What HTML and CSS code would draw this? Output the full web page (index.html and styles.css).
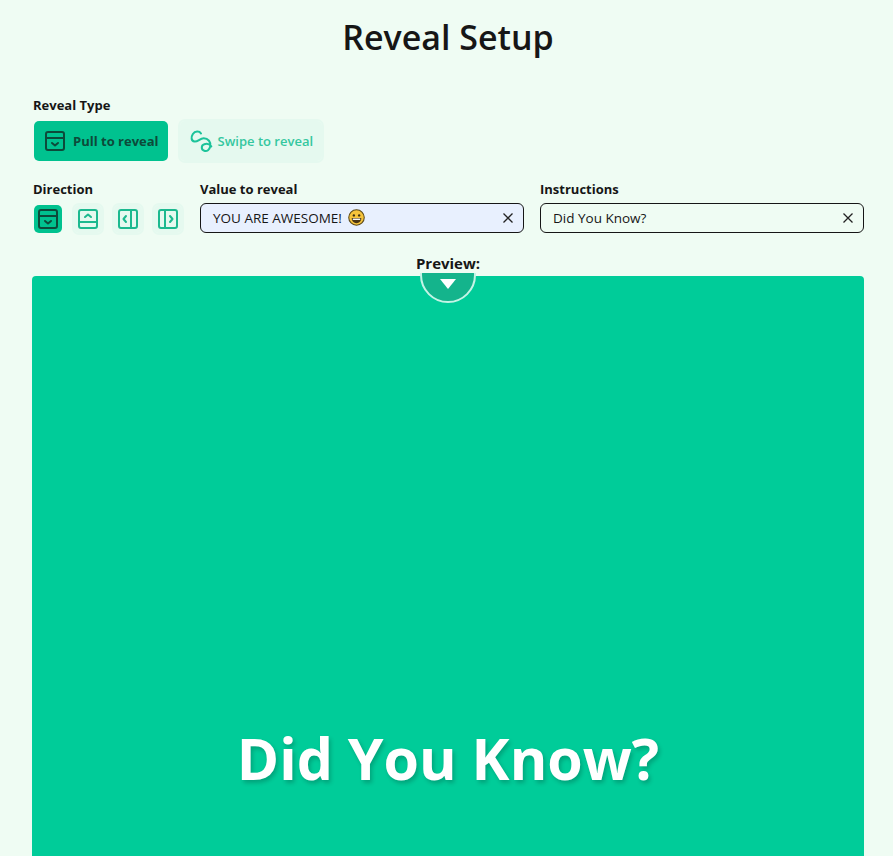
FILE: index.html
```html
<!DOCTYPE html>
<html lang="en">
<head>
  <meta charset="UTF-8" />
  <meta name="viewport" content="width=device-width, initial-scale=1.0"/>
  <title>Reveal Setup</title>
  <link rel="stylesheet" href="styles.css">
</head>
<body>

  <h1>Reveal Setup</h1>

  <div class="field type-field">
    <label class="inset">Reveal Type</label>
    <div class="type-row">
      <button class="type-btn active">
        <svg width="24" height="24" viewBox="0 0 24 24" fill="none" stroke="currentColor" stroke-width="2" stroke-linecap="round" stroke-linejoin="round"><rect x="3" y="3" width="18" height="18" rx="2"/><path d="M3 9h18"/><path d="M9 14l3 2.500 3-2.500"/></svg>
        Pull to reveal
      </button>
      <button class="type-btn">
        <svg class="swipe-icon" width="26" height="26" viewBox="0 0 24 24" fill="none" stroke="currentColor" stroke-width="1.900" stroke-linecap="round" stroke-linejoin="round"><path d="M12 5C10.500 2.500 6.500 2.500 4.500 5.500 2.500 8.500 3 12 6 12.500 9 13 11 9.500 14.500 9.500 18.500 9.500 21.500 13 20.500 17 20 20 17.500 22 15 21 12 20 12 16 15 15 17.500 14 20 15 21.500 17"/></svg>
        Swipe to reveal
      </button>
    </div>
  </div>

  <div class="options-row">
    <div class="field">
      <label class="inset">Direction</label>
      <div class="dir-row">
        <button class="dir-btn active">
          <svg width="24" height="24" viewBox="0 0 24 24" fill="none" stroke="currentColor" stroke-width="2" stroke-linecap="round" stroke-linejoin="round"><rect x="3" y="3" width="18" height="18" rx="2"/><path d="M3 9h18"/><path d="M9 14l3 2.500 3-2.500"/></svg>
        </button>
        <button class="dir-btn">
          <svg width="24" height="24" viewBox="0 0 24 24" fill="none" stroke="currentColor" stroke-width="2" stroke-linecap="round" stroke-linejoin="round"><rect x="3" y="3" width="18" height="18" rx="2"/><path d="M3 15h18"/><path d="M9 10l3-2.500 3 2.500"/></svg>
        </button>
        <button class="dir-btn">
          <svg width="24" height="24" viewBox="0 0 24 24" fill="none" stroke="currentColor" stroke-width="2" stroke-linecap="round" stroke-linejoin="round"><rect x="3" y="3" width="18" height="18" rx="2"/><path d="M15 3v18"/><path d="M10 9l-2.500 3 2.500 3"/></svg>
        </button>
        <button class="dir-btn">
          <svg width="24" height="24" viewBox="0 0 24 24" fill="none" stroke="currentColor" stroke-width="2" stroke-linecap="round" stroke-linejoin="round"><rect x="3" y="3" width="18" height="18" rx="2"/><path d="M9 3v18"/><path d="M14 9l2.500 3-2.500 3"/></svg>
        </button>
      </div>
    </div>
    <div class="field grow">
      <label>Value to reveal</label>
      <div class="text-input filled">
        <span>YOU ARE AWESOME! <span class="emoji"><svg width="17" height="17" viewBox="0 0 16 16"><circle cx="8" cy="8" r="7.300" fill="#f5c33b" stroke="#5c4a1a" stroke-width="1"/><circle cx="5.500" cy="6" r="1.100" fill="#3b2f12"/><circle cx="10.500" cy="6" r="1.100" fill="#3b2f12"/><path d="M3.500 8.500h9c0 3-2 4.800-4.500 4.800s-4.500-1.800-4.500-4.800z" fill="#4a3512"/><path d="M4.500 9h7v1.300h-7z" fill="#fff"/></svg></span></span>
        <svg class="clear" width="12" height="12" viewBox="0 0 12 12" fill="none" stroke="currentColor" stroke-width="1.300"><path d="M1.500 1.500l9 9M10.500 1.500l-9 9"/></svg>
      </div>
    </div>
    <div class="field grow">
      <label>Instructions</label>
      <div class="text-input">
        <span>Did You Know?</span>
        <svg class="clear" width="12" height="12" viewBox="0 0 12 12" fill="none" stroke="currentColor" stroke-width="1.300"><path d="M1.500 1.500l9 9M10.500 1.500l-9 9"/></svg>
      </div>
    </div>
  </div>

  <div class="preview-label">Preview:</div>
  <div class="preview">
    <div class="pull-handle"><span class="arrow"></span></div>
    <div class="preview-title">Did You Know?</div>
  </div>

</body>
</html>
```

FILE: styles.css
```css
html, body {
  height: 100%;
  overflow: hidden;
}
body {
  font-family: 'Open Sans', 'Noto Sans', sans-serif;
  background: #effcf3;
  color: #161616;
  margin: 0;
  padding: 0 29px 0 32px;
}
h1 {
  margin: 0;
  padding-top: 12px;
  height: 84px;
  box-sizing: border-box;
  text-align: center;
  font-size: 34px;
  line-height: 50px;
  font-weight: 600;
}
label {
  display: block;
  font-size: 13px;
  font-weight: 700;
  line-height: 18px;
  height: 18px;
}
label.inset {
  padding-left: 1px;
}
.field {
  display: flex;
  flex-direction: column;
}
.grow {
  flex: 1;
}
.type-field {
  margin-top: 12px;
}
.type-row {
  display: flex;
  gap: 8px;
  margin-top: 5px;
}
button {
  font-family: inherit;
  cursor: pointer;
}
.type-btn {
  display: flex;
  align-items: center;
  gap: 5px;
  box-sizing: border-box;
  height: 44px;
  padding: 0 9px 0 9px;
  border: 2px solid #e5f9ef;
  border-radius: 7px;
  background-clip: padding-box;
  font-size: 13px;
  font-weight: 600;
  background-color: #e5f9ef;
  color: #34c79f;
}
.type-btn.active {
  gap: 6px;
  border-color: transparent;
  background-color: #00c28f;
  color: #0d4a3a;
  font-weight: 700;
}
.swipe-icon {
  margin: 0 -1px;
  color: #1cc39a;
}
.options-row {
  display: flex;
  gap: 16px;
  margin-top: 17px;
}
.dir-row {
  display: flex;
  gap: 8px;
  margin-top: 5px;
}
.dir-btn {
  width: 32px;
  height: 32px;
  padding: 0;
  display: flex;
  align-items: center;
  justify-content: center;
  box-sizing: border-box;
  border: 2px solid #e5f9ef;
  border-radius: 7px;
  background-clip: padding-box;
  background-color: #e5f9ef;
  color: #1cb98f;
}
.dir-btn.active {
  border-color: transparent;
  background-color: #00c28f;
  color: #0d4a3a;
}
.text-input {
  display: flex;
  align-items: center;
  justify-content: space-between;
  box-sizing: border-box;
  height: 30px;
  margin-top: 5px;
  padding: 0 9px 0 12px;
  border: 1px solid #161616;
  border-radius: 6px;
  font-size: 13.500px;
}
.text-input.filled {
  background: #e8f0fe;
}
.emoji svg {
  vertical-align: -3px;
  margin-left: 3px;
}
.clear {
  color: #222;
}
.preview-label {
  text-align: center;
  margin-top: 18px;
  height: 23px;
  font-size: 15px;
  font-weight: 700;
  line-height: 21px;
  position: relative;
  z-index: 2;
}
.preview {
  position: relative;
  display: flex;
  flex-direction: column;
  align-items: center;
  height: 800px;
  background: #00cc99;
  border-radius: 4px 4px 0 0;
}
.pull-handle {
  position: absolute;
  top: -29px;
  left: 50%;
  margin-left: -28px;
  width: 56px;
  height: 56px;
  box-sizing: border-box;
  border: 2px solid #c4f4e6;
  border-radius: 50%;
  background: #14b48c;
  clip-path: inset(26px -1px -1px -1px);
}
.arrow {
  position: absolute;
  left: 18px;
  top: 30px;
  border-left: 8px solid transparent;
  border-right: 8px solid transparent;
  border-top: 10px solid #fff;
}
.preview-title {
  margin-top: 442px;
  font-size: 57.300px;
  line-height: 80px;
  font-weight: 700;
  color: #fff;
  text-shadow: 2px 3px 4px rgba(0,0,0,0.2);
}
```
